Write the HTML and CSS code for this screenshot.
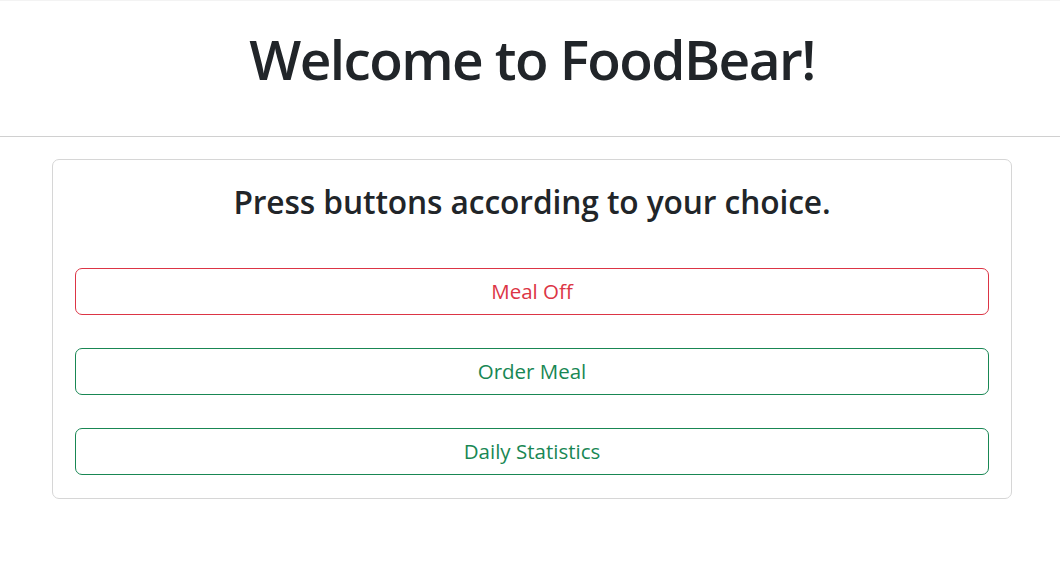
FILE: index.html
```html
<!DOCTYPE html>
<html lang="en">
<head>
<meta charset="utf-8">
<title>FoodBear</title>
<link rel="stylesheet" href="styles.css">
</head>
<body>
<header class="site-header">
  <h1 class="title">Welcome to FoodBear!</h1>
</header>
<main class="container">
  <section class="card">
    <h2 class="card-title">Press buttons according to your choice.</h2>
    <div class="actions">
      <button class="btn btn-danger">Meal Off</button>
      <button class="btn btn-success">Order Meal</button>
      <button class="btn btn-success">Daily Statistics</button>
    </div>
  </section>
</main>
</body>
</html>
```
FILE: styles.css
```css
* { box-sizing: border-box; }
html, body { margin: 0; padding: 0; background: #fff; }
body {
  font-family: "Open Sans", "Noto Sans", sans-serif;
  color: #212529;
}
.site-header {
  height: 137px;
  border-top: 1px solid #f3f3f3;
  border-bottom: 1px solid #d0d0d0;
  display: flex;
  justify-content: center;
  padding-top: 22px;
}
.title {
  margin: 0 0 0 4px;
  font-size: 55px;
  font-weight: 600;
  line-height: 72px;
  letter-spacing: -1.6px;
}
.container {
  width: 964px;
  padding-left: 4px;
  margin: 22px auto 0;
}
.card {
  border: 1px solid #d6d6d6;
  border-radius: 7px;
  padding: 21px 22px 23px;
}
.card-title {
  margin: 0 0 45px;
  text-align: center;
  font-size: 31.7px;
  font-weight: 600;
  line-height: 42px;
  letter-spacing: -0.1px;
}
.actions {
  display: flex;
  flex-direction: column;
  gap: 33.5px;
}
.btn {
  display: block;
  width: 100%;
  height: 46.5px;
  background: #fff;
  border: 1px solid;
  border-radius: 7px;
  font-family: inherit;
  font-size: 20.5px;
  line-height: 1;
  padding: 0 0 1px;
  cursor: pointer;
}
.btn-danger { color: #dc3545; border-color: #dc3545; }
.btn-success { color: #198754; border-color: #198754; }
```
